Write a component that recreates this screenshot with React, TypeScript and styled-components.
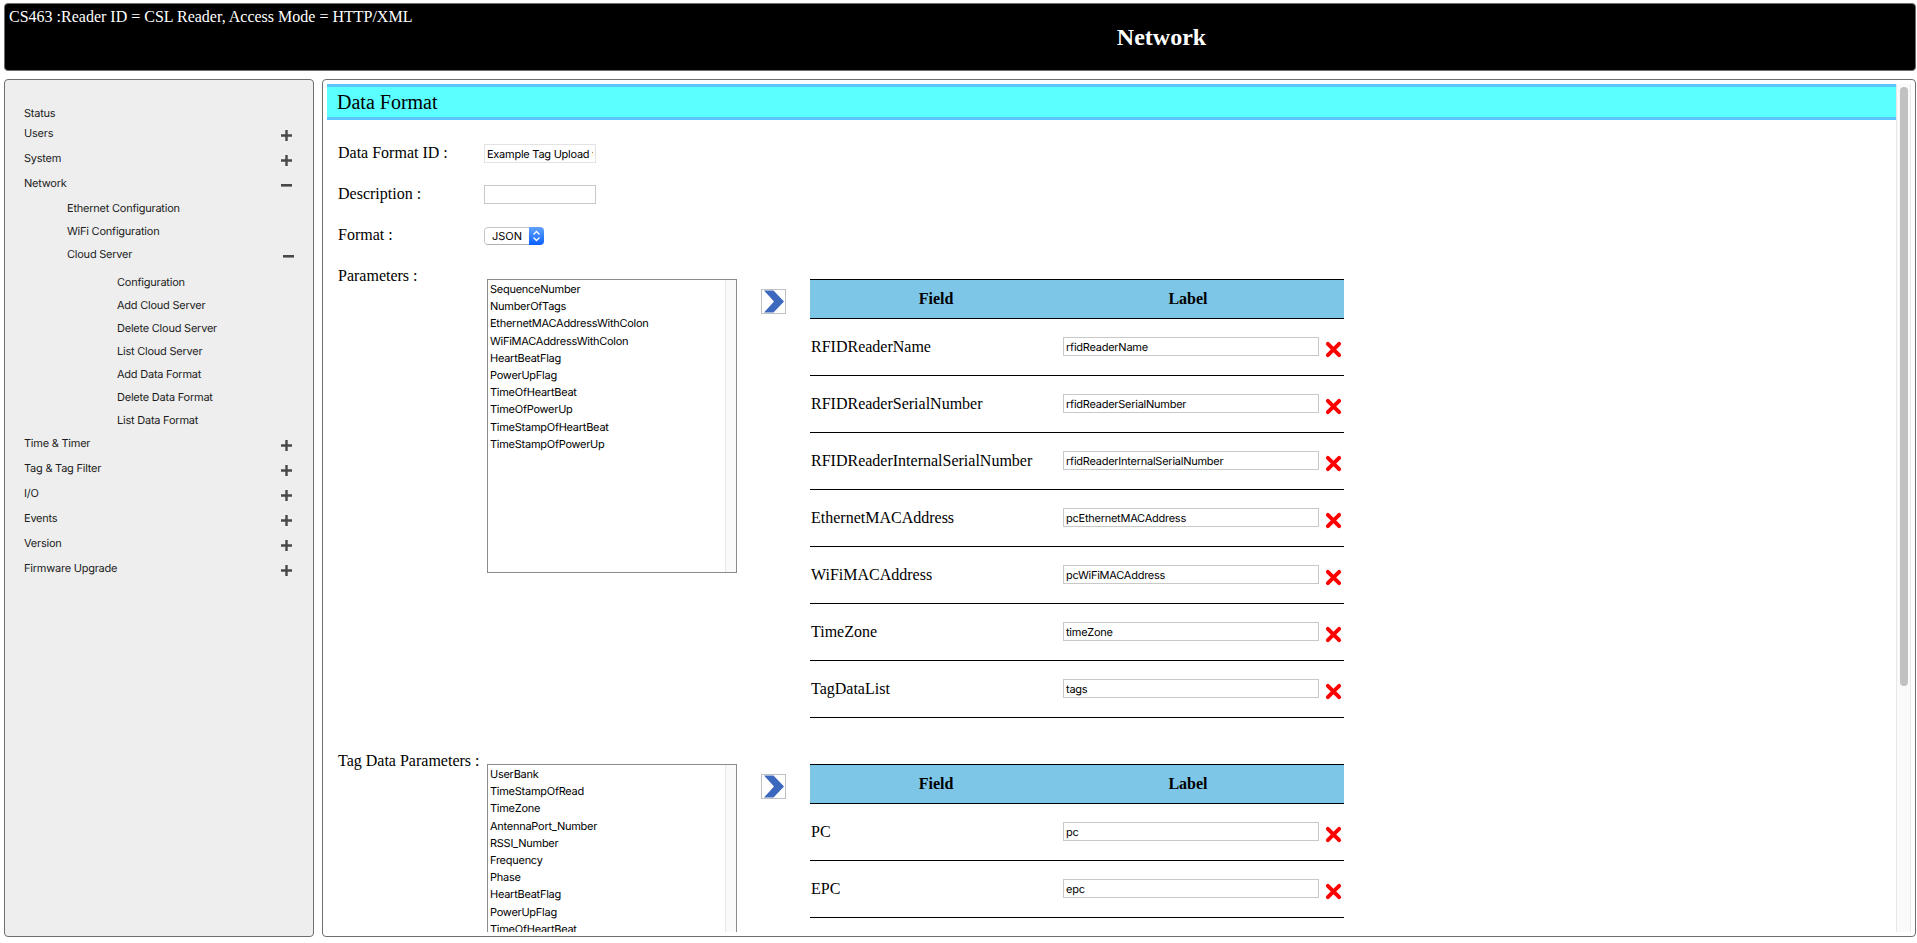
import React from "react";
import styled, { createGlobalStyle } from "styled-components";

const UI_FONT = `Inter, "Liberation Sans", sans-serif`;

const GlobalStyle = createGlobalStyle`
  * { box-sizing: border-box; }
  body {
    margin: 0;
    background: #fff;
    color: #000;
    font: 16px/18px "Liberation Serif", "Times New Roman", serif;
    overflow: hidden;
  }
`;

const Page = styled.div`
  display: flex;
  flex-direction: column;
  gap: 8px;
  height: 943px;
  padding: 3px 1px 6px 4px;
`;

const Header = styled.header`
  display: flex;
  flex: none;
  height: 68px;
  padding: 4px;
  border: 1px solid #6e6e6e;
  border-radius: 4px;
  background: #000;
  color: #fff;
`;

const ReaderInfo = styled.div`
  width: 404px;
  white-space: nowrap;
`;

const PageTitle = styled.h1`
  flex: 1;
  margin: 16px 0 0;
  padding-right: 1px;
  font-size: 24px;
  line-height: 27px;
  text-align: center;
`;

const Columns = styled.div`
  display: flex;
  flex: 1;
  gap: 8px;
  min-height: 0;
`;

const Sidebar = styled.nav`
  width: 310px;
  padding: 23px 19px 0 19px;
  border: 1px solid #6e6e6e;
  border-radius: 4px;
  background: #eee;
  color: #1c1c1c;
  font: 11px/20px ${UI_FONT};
  letter-spacing: -0.23px;
  text-rendering: geometricPrecision;
`;

const NavItem = styled.div<{ $level?: number; $height?: number }>`
  display: flex;
  justify-content: space-between;
  height: ${(p) => p.$height ?? 25}px;
  padding-left: ${(p) => [0, 43, 93][p.$level ?? 0]}px;
  margin-right: ${(p) => (p.$level ? 0 : 2)}px;
`;

const Toggle = styled.svg`
  width: 11px;
  height: 11px;
  margin-top: 7px;
  fill: #484848;
`;

const Main = styled.main`
  display: flex;
  flex: 1;
  min-width: 0;
  padding: 4px;
  border: 1px solid #6e6e6e;
  border-radius: 4px;
`;

const Content = styled.div`
  flex: 1;
  min-width: 0;
  overflow: hidden;
`;

const ScrollTrack = styled.div`
  width: 15px;
  padding: 3px 2px 0 3px;
  border: solid #e8e8e8;
  border-width: 0 1px;
  background: #fafafa;
`;

const ScrollThumb = styled.div`
  width: 8px;
  height: 599px;
  border-radius: 4px;
  background: #c1c1c1;
`;

const SectionTitle = styled.h2`
  height: 36px;
  margin: 0 0 24px;
  padding-left: 10px;
  border: solid #5cc4ff;
  border-width: 3px 0;
  background: #5cffff;
  font-size: 20px;
  font-weight: normal;
  line-height: 30px;
`;

const FormRow = styled.div<{ $height?: number }>`
  display: flex;
  align-items: flex-start;
  height: ${(p) => p.$height ?? 41}px;
  padding-left: 11px;
`;

const Label = styled.label`
  width: 146px;
  white-space: nowrap;
`;

const TextInput = styled.input<{ $width: number }>`
  width: ${(p) => p.$width}px;
  height: 19px;
  padding: 1px 2px 0;
  border: 1px solid #c8c8c8;
  border-radius: 0;
  outline: none;
  background: #fff;
  color: #000;
  font: 11px/16px ${UI_FONT};
  letter-spacing: -0.25px;
  text-rendering: geometricPrecision;
  &:disabled {
    border-color: #e3e3e3;
  }
`;

const Select = styled.div`
  display: flex;
  width: 60px;
  height: 18px;
  margin-top: 1px;
  border-radius: 4px;
  overflow: hidden;
  font: 11px/16px ${UI_FONT};
  text-rendering: geometricPrecision;
`;

const SelectValue = styled.div`
  flex: 1;
  padding-left: 7px;
  border: 1px solid #c6c6c6;
  border-bottom-color: #b0b0b0;
  border-right: 0;
  border-radius: 4px 0 0 4px;
`;

const SelectArrows = styled.div`
  display: flex;
  align-items: center;
  justify-content: center;
  width: 15px;
  background: linear-gradient(#62a2fb, #0a60ff);
`;

const ListBox = styled.div`
  display: flex;
  width: 250px;
  height: 294px;
  margin: 12px 0 0 3px;
  border: 1px solid #8b8b8b;
  font: 11px/17.2px ${UI_FONT};
  letter-spacing: -0.26px;
  text-rendering: geometricPrecision;
`;

const Options = styled.div`
  flex: 1;
  padding: 1px 0 0 2px;
  overflow: hidden;
`;

const ListGutter = styled.div`
  width: 11px;
  border-left: 1px solid #e8e8e8;
  background: #fafafa;
`;

const AddButton = styled.button`
  display: flex;
  width: 25px;
  height: 25px;
  margin: 22px 24px 0;
  padding: 0;
  border: 1px solid #c0c0c0;
  background: #fff;
`;

const FieldTable = styled.div`
  width: 534px;
  margin-top: 12px;
  border-bottom: 1px solid #000;
`;

const TableRow = styled.div`
  display: grid;
  grid-template-columns: 253px 256px 25px;
  align-items: center;
  height: 57px;
  padding-bottom: 1px;
  border-top: 1px solid #000;
`;

const TableHead = styled(TableRow)`
  grid-template-columns: 252px 252px 30px;
  height: 39px;
  background: #7dc6e8;
  font-weight: bold;
  text-align: center;
`;

const FieldName = styled.div`
  padding-left: 1px;
`;

const DeleteIcon = styled.svg`
  width: 17px;
  height: 17px;
  margin: 5px 0 0 6px;
`;

const PlusIcon = () => (
  <Toggle viewBox="0 0 11 11">
    <path d="M4.300 0h2.400v4.300H11v2.400H6.700V11H4.300V6.700H0V4.300h4.300z" />
  </Toggle>
);

const MinusIcon = () => (
  <Toggle viewBox="0 0 11 11">
    <path d="M0 4h11v2.600H0z" />
  </Toggle>
);

type Item = { text: string; level?: number; height?: number; state?: "open" | "closed" };

const navItems: Item[] = [
  { text: "Status", height: 20 },
  { text: "Users", state: "closed" },
  { text: "System", state: "closed" },
  { text: "Network", state: "open" },
  { text: "Ethernet Configuration", level: 1, height: 23 },
  { text: "WiFi Configuration", level: 1, height: 23 },
  { text: "Cloud Server", level: 1, height: 28, state: "open" },
  { text: "Configuration", level: 2, height: 23 },
  { text: "Add Cloud Server", level: 2, height: 23 },
  { text: "Delete Cloud Server", level: 2, height: 23 },
  { text: "List Cloud Server", level: 2, height: 23 },
  { text: "Add Data Format", level: 2, height: 23 },
  { text: "Delete Data Format", level: 2, height: 23 },
  { text: "List Data Format", level: 2, height: 23 },
  { text: "Time & Timer", state: "closed" },
  { text: "Tag & Tag Filter", state: "closed" },
  { text: "I/O", state: "closed" },
  { text: "Events", state: "closed" },
  { text: "Version", state: "closed" },
  { text: "Firmware Upgrade", state: "closed" },
];

const parameters = [
  "SequenceNumber",
  "NumberOfTags",
  "EthernetMACAddressWithColon",
  "WiFiMACAddressWithColon",
  "HeartBeatFlag",
  "PowerUpFlag",
  "TimeOfHeartBeat",
  "TimeOfPowerUp",
  "TimeStampOfHeartBeat",
  "TimeStampOfPowerUp",
];

const tagParameters = [
  "UserBank",
  "TimeStampOfRead",
  "TimeZone",
  "AntennaPort_Number",
  "RSSI_Number",
  "Frequency",
  "Phase",
  "HeartBeatFlag",
  "PowerUpFlag",
  "TimeOfHeartBeat",
];

const fields = [
  ["RFIDReaderName", "rfidReaderName"],
  ["RFIDReaderSerialNumber", "rfidReaderSerialNumber"],
  ["RFIDReaderInternalSerialNumber", "rfidReaderInternalSerialNumber"],
  ["EthernetMACAddress", "pcEthernetMACAddress"],
  ["WiFiMACAddress", "pcWiFiMACAddress"],
  ["TimeZone", "timeZone"],
  ["TagDataList", "tags"],
];

const tagFields = [
  ["PC", "pc"],
  ["EPC", "epc"],
];

function ParameterPicker({ label, options, rows }: { label: string; options: string[]; rows: string[][] }) {
  return (
    <FormRow $height={485}>
      <Label>{label}</Label>
      <ListBox>
        <Options>
          {options.map((o) => (
            <div key={o}>{o}</div>
          ))}
        </Options>
        <ListGutter />
      </ListBox>
      <AddButton aria-label="Add">
        <svg width="23" height="23" viewBox="0 0 23 23">
          <path d="M2 .5h9.500L22 11.500 11.500 22.500H2L12 11.500z" fill="#3c68bd" />
        </svg>
      </AddButton>
      <FieldTable>
        <TableHead>
          <div>Field</div>
          <div>Label</div>
        </TableHead>
        {rows.map(([name, value]) => (
          <TableRow key={name}>
            <FieldName>{name}</FieldName>
            <TextInput $width={256} defaultValue={value} />
            <DeleteIcon viewBox="0 0 16 16">
              <path d="M2.700 2.700l10.600 10.600M13.300 2.700l-10.600 10.600" stroke="#f00" strokeWidth="3.700" strokeLinecap="round" />
            </DeleteIcon>
          </TableRow>
        ))}
      </FieldTable>
    </FormRow>
  );
}

export default function App() {
  return (
    <Page>
      <GlobalStyle />
      <Header>
        <ReaderInfo>CS463 :Reader ID = CSL Reader, Access Mode = HTTP/XML</ReaderInfo>
        <PageTitle>Network</PageTitle>
      </Header>
      <Columns>
        <Sidebar>
          {navItems.map((item) => (
            <NavItem key={item.text} $level={item.level} $height={item.height}>
              {item.text}
              {item.state === "closed" && <PlusIcon />}
              {item.state === "open" && <MinusIcon />}
            </NavItem>
          ))}
        </Sidebar>
        <Main>
          <Content>
            <SectionTitle>Data Format</SectionTitle>
            <FormRow>
              <Label>Data Format ID :</Label>
              <TextInput $width={112} disabled defaultValue="Example Tag Upload to" />
            </FormRow>
            <FormRow>
              <Label>Description :</Label>
              <TextInput $width={112} />
            </FormRow>
            <FormRow>
              <Label>Format :</Label>
              <Select>
                <SelectValue>JSON</SelectValue>
                <SelectArrows>
                  <svg width="9" height="12" viewBox="0 0 9 12" fill="none" stroke="#fff" strokeWidth="1.3">
                    <path d="M1.500 4.500l3-3 3 3M1.500 7.500l3 3 3-3" />
                  </svg>
                </SelectArrows>
              </Select>
            </FormRow>
            <ParameterPicker label="Parameters :" options={parameters} rows={fields} />
            <ParameterPicker label="Tag Data Parameters :" options={tagParameters} rows={tagFields} />
          </Content>
          <ScrollTrack>
            <ScrollThumb />
          </ScrollTrack>
        </Main>
      </Columns>
    </Page>
  );
}
